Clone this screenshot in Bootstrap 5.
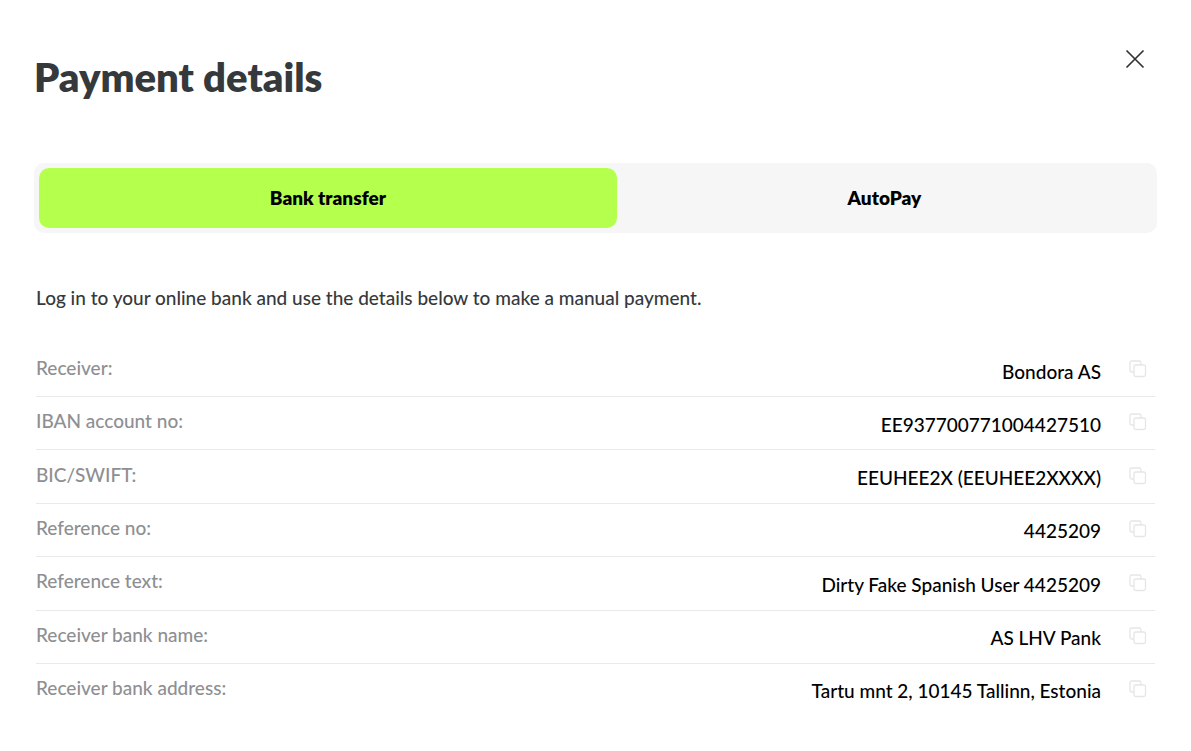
<!DOCTYPE html>
<html lang="en">
<head>
<meta charset="utf-8">
<meta name="viewport" content="width=device-width, initial-scale=1">
<title>Payment details</title>
<link href="https://cdn.jsdelivr.net/npm/bootstrap@5.3.0/dist/css/bootstrap.min.css" rel="stylesheet">
<style>
body { font-family: Lato, "Noto Sans", sans-serif; font-size: 19px; font-weight: 500; line-height: 24px; color: #36393c; background: #fff; }
.dialog-page { padding: 44px 34px 32px; }
.dialog-title { font-size: 40px; line-height: 48px; font-weight: 800; padding-top: 9px; color: #36393c; }
.close-button { width: 30px; height: 30px; margin-right: 7px; color: #303336; }
.method-tabs { margin-top: 62px; padding: 5px; border-radius: 10px; background: #f6f6f6; }
.method-tabs .nav-link { height: 60px; border-radius: 10px; font-weight: 800; color: #000; }
.method-tabs .nav-link.active { background: #b5ff4d; color: #000; }
.transfer-body { padding: 0 2px; }
.transfer-intro { margin: 53px 0 34px; }
.transfer-table { height: 372px; color: #000; }
.transfer-table th { color: #8e8f92; font-weight: 500; text-align: left; padding: 0 0 4px; }
.transfer-table td { padding: 3px 0 0; text-align: right; }
.transfer-table td:last-child { width: 54px; padding: 0 8px 6px 0; }
.transfer-table tr:not(:last-child) { border-bottom: 1px solid #e9e9ea; }
.copy-button { color: #e6e6e7; }
</style>
</head>
<body>
<svg width="0" height="0" class="position-absolute" aria-hidden="true">
  <symbol id="copy" viewBox="0 0 18 18" fill="none" stroke="currentColor" stroke-width="1.3">
    <rect x="5" y="5" width="11.5" height="11.5" rx="1.8"/>
    <path d="M5 12H2.800A1.800 1.800 0 0 1 1 10.200V2.800A1.800 1.800 0 0 1 2.800 1H10.200A1.800 1.800 0 0 1 12 2.800V5"/>
  </symbol>
</svg>
<main class="dialog-page">
  <header class="d-flex justify-content-between align-items-start">
    <h1 class="dialog-title mb-0">Payment details</h1>
    <button type="button" class="close-button btn p-0 border-0 d-flex align-items-center justify-content-center" aria-label="Close">
      <svg width="20" height="20" viewBox="0 0 20 20" fill="none" stroke="currentColor" stroke-width="1.7"><path d="M1.500 1.500L18.500 18.500M18.500 1.500L1.500 18.500"/></svg>
    </button>
  </header>
  <div class="method-tabs nav nav-pills nav-fill" role="tablist">
    <button type="button" class="nav-link nav-item active px-0 py-0" role="tab" aria-selected="true">Bank transfer</button>
    <button type="button" class="nav-link nav-item px-0 py-0" role="tab" aria-selected="false">AutoPay</button>
  </div>
  <section class="transfer-body">
    <p class="transfer-intro">Log in to your online bank and use the details below to make a manual payment.</p>
    <table class="transfer-table w-100">
      <tbody>
        <tr><th scope="row">Receiver:</th><td>Bondora AS</td><td><button type="button" class="copy-button btn p-0 border-0 d-inline-flex align-middle" aria-label="Copy receiver"><svg width="18" height="18"><use href="#copy"/></svg></button></td></tr>
        <tr><th scope="row">IBAN account no:</th><td>EE937700771004427510</td><td><button type="button" class="copy-button btn p-0 border-0 d-inline-flex align-middle" aria-label="Copy IBAN"><svg width="18" height="18"><use href="#copy"/></svg></button></td></tr>
        <tr><th scope="row">BIC/SWIFT:</th><td>EEUHEE2X (EEUHEE2XXXX)</td><td><button type="button" class="copy-button btn p-0 border-0 d-inline-flex align-middle" aria-label="Copy BIC"><svg width="18" height="18"><use href="#copy"/></svg></button></td></tr>
        <tr><th scope="row">Reference no:</th><td>4425209</td><td><button type="button" class="copy-button btn p-0 border-0 d-inline-flex align-middle" aria-label="Copy reference number"><svg width="18" height="18"><use href="#copy"/></svg></button></td></tr>
        <tr><th scope="row">Reference text:</th><td>Dirty Fake Spanish User 4425209</td><td><button type="button" class="copy-button btn p-0 border-0 d-inline-flex align-middle" aria-label="Copy reference text"><svg width="18" height="18"><use href="#copy"/></svg></button></td></tr>
        <tr><th scope="row">Receiver bank name:</th><td>AS LHV Pank</td><td><button type="button" class="copy-button btn p-0 border-0 d-inline-flex align-middle" aria-label="Copy bank name"><svg width="18" height="18"><use href="#copy"/></svg></button></td></tr>
        <tr><th scope="row">Receiver bank address:</th><td>Tartu mnt 2, 10145 Tallinn, Estonia</td><td><button type="button" class="copy-button btn p-0 border-0 d-inline-flex align-middle" aria-label="Copy bank address"><svg width="18" height="18"><use href="#copy"/></svg></button></td></tr>
      </tbody>
    </table>
  </section>
</main>
<script src="https://cdn.jsdelivr.net/npm/bootstrap@5.3.0/dist/js/bootstrap.bundle.min.js"></script>
</body>
</html>
